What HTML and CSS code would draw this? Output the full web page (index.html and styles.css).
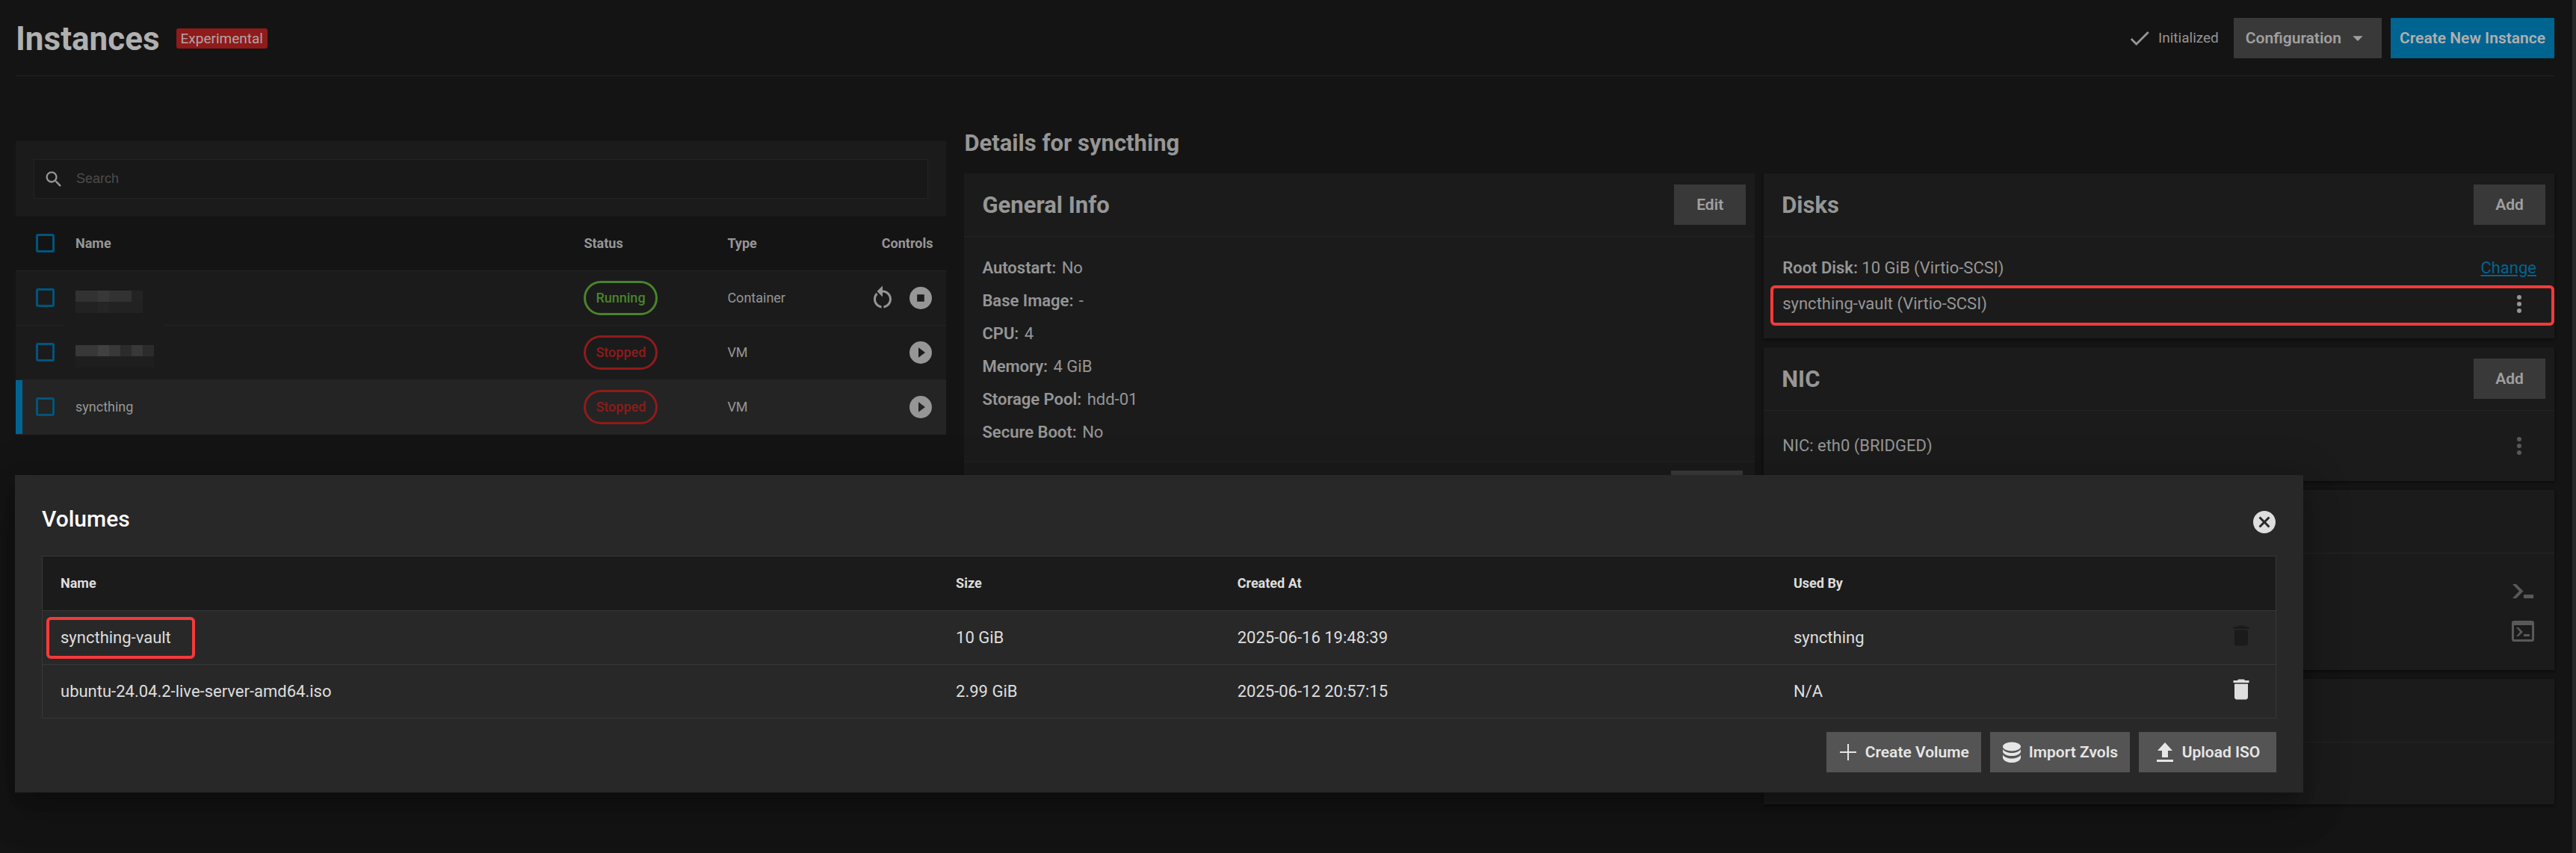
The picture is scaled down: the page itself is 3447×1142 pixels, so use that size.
FILE: index.html
```html
<!DOCTYPE html>
<html lang="en">
<head>
  <meta charset="utf-8">
  <title>Instances</title>
  <link rel="stylesheet" href="styles.css">
</head>
<body>
  <div class="page">
    <header class="page-header">
      <h1>Instances</h1>
      <span class="badge">Experimental</span>
      <div class="header-actions">
        <span class="state">
          <svg width="34" height="34" viewBox="0 0 24 24"><path d="M9 16.2L4.8 12l-1.4 1.4L9 19 21 7l-1.4-1.4z"/></svg>
          Initialized
        </span>
        <button class="btn btn-config">Configuration
          <svg width="32" height="32" viewBox="0 0 24 24"><path d="M7 10l5 5 5-5z"/></svg>
        </button>
        <button class="btn btn-primary">Create New Instance</button>
      </div>
    </header>

    <main class="content">
      <section class="list">
        <div class="search-panel">
          <label class="search-box" for="search">
            <svg width="28" height="28" viewBox="0 0 24 24"><path d="M15.5 14h-.79l-.28-.27A6.47 6.47 0 0 0 16 9.5 6.5 6.5 0 1 0 9.5 16c1.61 0 3.09-.59 4.23-1.57l.27.28v.79l5 4.99L20.49 19l-4.99-5zm-6 0C7.01 14 5 11.99 5 9.5S7.01 5 9.5 5 14 7.01 14 9.5 11.99 14 9.5 14z"/></svg>
            <input type="text" id="search" placeholder="Search">
          </label>
        </div>
        <table class="instances">
          <colgroup>
            <col class="col-check"><col><col class="col-status"><col class="col-type"><col class="col-controls">
          </colgroup>
          <thead>
            <tr>
              <th><input type="checkbox" aria-label="Select all"></th>
              <th>Name</th>
              <th>Status</th>
              <th>Type</th>
              <th class="controls-head">Controls</th>
            </tr>
          </thead>
          <tbody>
            <tr>
              <td><input type="checkbox" aria-label="Select instance"></td>
              <td>
                <div class="masked masked-first">
                  <svg width="90" height="30" shape-rendering="crispEdges">
                    <path fill="#323232" d="M0 0h75v15H0z"/><path fill="#383838" d="M30 0h15v15H30z"/><path fill="#232323" d="M75 0h15v15H75z"/>
                    <path fill="#222" d="M0 15h90v15H0z"/><path fill="#252525" d="M30 15h15v15H30z"/>
                  </svg>
                </div>
              </td>
              <td><span class="pill running">Running</span></td>
              <td>Container</td>
              <td>
                <div class="controls">
                  <button class="icon-btn" aria-label="Restart"><svg width="36" height="36" viewBox="0 0 24 24"><path d="M12 5V1L7 6l5 5V7c3.31 0 6 2.69 6 6 0 2.97-2.17 5.43-5 5.91v2.02c3.95-.49 7-3.85 7-7.93 0-4.42-3.58-8-8-8zM6 13c0-1.65.67-3.15 1.76-4.24L6.34 7.34A8 8 0 0 0 4 13c0 4.08 3.05 7.44 7 7.93v-2.02c-2.83-.48-5-2.94-5-5.91z"/></svg></button>
                  <button class="icon-btn" aria-label="Stop"><svg width="36" height="36" viewBox="0 0 24 24"><path d="M12 2a10 10 0 1 0 0 20 10 10 0 0 0 0-20zm3.200 13.200H8.800V8.800h6.400z"/></svg></button>
                </div>
              </td>
            </tr>
            <tr>
              <td><input type="checkbox" aria-label="Select instance"></td>
              <td>
                <div class="masked">
                  <svg width="105" height="30" shape-rendering="crispEdges">
                    <path fill="#383838" d="M0 0h105v15H0z"/><path fill="#414141" d="M30 0h15v15H30z"/><path fill="#2b2b2b" d="M60 0h15v15H60zM90 0h15v15H90z"/>
                    <path fill="#1e1e1e" d="M0 15h105v15H0z"/>
                  </svg>
                </div>
              </td>
              <td><span class="pill stopped">Stopped</span></td>
              <td>VM</td>
              <td>
                <div class="controls">
                  <button class="icon-btn" aria-label="Start"><svg width="36" height="36" viewBox="0 0 24 24"><path d="M12 2a10 10 0 1 0 0 20 10 10 0 0 0 0-20zm-2 14.500v-9l6 4.500z"/></svg></button>
                </div>
              </td>
            </tr>
            <tr class="selected">
              <td><input type="checkbox" aria-label="Select syncthing"></td>
              <td>syncthing</td>
              <td><span class="pill stopped">Stopped</span></td>
              <td>VM</td>
              <td>
                <div class="controls">
                  <button class="icon-btn" aria-label="Start"><svg width="36" height="36" viewBox="0 0 24 24"><path d="M12 2a10 10 0 1 0 0 20 10 10 0 0 0 0-20zm-2 14.500v-9l6 4.500z"/></svg></button>
                </div>
              </td>
            </tr>
          </tbody>
        </table>
      </section>

      <section class="details">
        <h2>Details for syncthing</h2>
        <div class="details-columns">
          <div class="column">
            <div class="card card-general">
              <div class="card-header">
                <h3>General Info</h3>
                <button class="btn">Edit</button>
              </div>
              <div class="info">
                <p><strong>Autostart:</strong> No</p>
                <p><strong>Base Image:</strong> -</p>
                <p><strong>CPU:</strong> 4</p>
                <p><strong>Memory:</strong> 4 GiB</p>
                <p><strong>Storage Pool:</strong> hdd-01</p>
                <p><strong>Secure Boot:</strong> No</p>
              </div>
              <div class="card-actions">
                <button class="btn">Delete</button>
              </div>
            </div>
          </div>
          <div class="column">
            <div class="card">
              <div class="card-header">
                <h3>Disks</h3>
                <button class="btn">Add</button>
              </div>
              <div class="rows rows-disks">
                <div class="row row-root">
                  <span><strong>Root Disk:</strong> 10 GiB (Virtio-SCSI)</span>
                  <a href="#">Change</a>
                </div>
                <div class="row row-marked">
                  <span>syncthing-vault (Virtio-SCSI)</span>
                  <button class="icon-btn" aria-label="Disk menu"><svg width="36" height="36" viewBox="0 0 24 24"><path d="M12 8a2 2 0 1 0 0-4 2 2 0 0 0 0 4zm0 2a2 2 0 1 0 0 4 2 2 0 0 0 0-4zm0 6a2 2 0 1 0 0 4 2 2 0 0 0 0-4z"/></svg></button>
                </div>
              </div>
            </div>
            <div class="card">
              <div class="card-header">
                <h3>NIC</h3>
                <button class="btn">Add</button>
              </div>
              <div class="rows rows-nic">
                <div class="row">
                  <span>NIC: eth0 (BRIDGED)</span>
                  <button class="icon-btn faded" aria-label="NIC menu"><svg width="36" height="36" viewBox="0 0 24 24"><path d="M12 8a2 2 0 1 0 0-4 2 2 0 0 0 0 4zm0 2a2 2 0 1 0 0 4 2 2 0 0 0 0-4zm0 6a2 2 0 1 0 0 4 2 2 0 0 0 0-4z"/></svg></button>
                </div>
              </div>
            </div>
            <div class="card">
              <div class="card-header"></div>
              <div class="tools">
                <button class="icon-btn faded" aria-label="Shell"><svg width="30" height="30" viewBox="0 0 30 30"><path d="M1 4h5l9.500 9.500L6 23H1l9-9.500zM16 18h13v5H16z"/></svg></button>
                <button class="icon-btn faded" aria-label="Console"><svg width="30" height="30" viewBox="0 0 30 30"><path fill-rule="evenodd" d="M3 1h24a3 3 0 0 1 3 3v22a3 3 0 0 1-3 3H3a3 3 0 0 1-3-3V4a3 3 0 0 1 3-3zm0 6v19h24V7z"/><path d="M6 10h3l6 6-6 6H6l5-6zM16 19h8v3h-8z"/></svg></button>
              </div>
            </div>
            <div class="card">
              <div class="card-header"></div>
              <div class="blank"></div>
            </div>
          </div>
        </div>
      </section>
    </main>
  </div>

  <div class="scroll-track"></div>

  <div class="dialog" role="dialog" aria-labelledby="volumes-title">
    <div class="dialog-header">
      <h2 id="volumes-title">Volumes</h2>
      <button class="icon-btn" aria-label="Close"><svg width="36" height="36" viewBox="0 0 24 24"><path d="M12 2C6.470 2 2 6.470 2 12s4.470 10 10 10 10-4.470 10-10S17.530 2 12 2zm5 13.590L15.590 17 12 13.410 8.410 17 7 15.590 10.590 12 7 8.410 8.410 7 12 10.590 15.590 7 17 8.410 13.410 12z"/></svg></button>
    </div>
    <table class="volumes">
      <colgroup>
        <col class="col-name"><col class="col-size"><col class="col-created"><col><col class="col-delete">
      </colgroup>
      <thead>
        <tr>
          <th>Name</th>
          <th>Size</th>
          <th>Created At</th>
          <th>Used By</th>
          <th></th>
        </tr>
      </thead>
      <tbody>
        <tr>
          <td><span class="marked">syncthing-vault</span></td>
          <td>10 GiB</td>
          <td>2025-06-16 19:48:39</td>
          <td>syncthing</td>
          <td class="delete"><button class="icon-btn" disabled aria-label="Delete syncthing-vault"><svg width="36" height="36" viewBox="0 0 24 24"><path d="M6 19c0 1.100.9 2 2 2h8c1.100 0 2-.9 2-2V7H6v12zM19 4h-3.500l-1-1h-5l-1 1H5v2h14V4z"/></svg></button></td>
        </tr>
        <tr>
          <td>ubuntu-24.04.2-live-server-amd64.iso</td>
          <td>2.99 GiB</td>
          <td>2025-06-12 20:57:15</td>
          <td>N/A</td>
          <td class="delete"><button class="icon-btn" aria-label="Delete ISO"><svg width="36" height="36" viewBox="0 0 24 24"><path d="M6 19c0 1.100.9 2 2 2h8c1.100 0 2-.9 2-2V7H6v12zM19 4h-3.500l-1-1h-5l-1 1H5v2h14V4z"/></svg></button></td>
        </tr>
      </tbody>
    </table>
    <div class="dialog-actions">
      <button class="btn"><svg width="26" height="28" viewBox="0 0 26 28"><path d="M12 3h2v10h10v2H14v10h-2V15H2v-2h10z"/></svg>Create Volume</button>
      <button class="btn"><svg width="26" height="28" viewBox="0 0 26 28"><ellipse cx="13" cy="6.500" rx="12" ry="6"/><path d="M1 10c2 3.500 7 5 12 5s10-1.500 12-5v3.500c-1 3.500-6 5.500-12 5.500S2 17 1 13.500z"/><path d="M1 17.500c2 3.500 7 5 12 5s10-1.500 12-5V22c-1 3.500-6 6-12 6S2 25.500 1 22z"/></svg>Import Zvols</button>
      <button class="btn"><svg width="26" height="28" viewBox="0 0 26 28"><path d="M13 1l10 11h-6v9H9v-9H3zM2 24h22v3H2z"/></svg>Upload ISO</button>
    </div>
  </div>
</body>
</html>
```
FILE: styles.css
```css
* {
  box-sizing: border-box;
}
body {
  margin: 0;
  min-height: 100vh;
  background: #141414;
  color: #969696;
  font-family: Roboto, "Liberation Sans", sans-serif;
  font-size: 22px;
  line-height: 28px;
}
h1, h2, h3, p {
  margin: 0;
}
h2, h3 {
  font-size: 31px;
  line-height: 36px;
  font-weight: 700;
}
strong {
  font-weight: 600;
}
svg {
  display: block;
  flex: none;
  fill: currentColor;
}
.page {
  padding: 0 29px 0 21px;
}

/* header */
.page-header {
  display: flex;
  align-items: center;
  height: 102px;
  border-bottom: 1px solid #242424;
}
.page-header h1 {
  padding-top: 2px;
  color: #b0b0b0;
  font-size: 44px;
  line-height: 52px;
}
.badge {
  margin-top: 2px;
  margin-left: 22px;
  padding: 0 6px;
  border-radius: 3px;
  background: #8f1b1b;
  color: #b5a5a5;
  font-size: 19px;
  line-height: 27px;
}
.header-actions {
  display: flex;
  align-items: center;
  gap: 12px;
  margin-left: auto;
}
.state {
  display: flex;
  align-items: center;
  gap: 8px;
  margin-right: 8px;
  font-size: 19px;
}
.btn {
  display: flex;
  align-items: center;
  justify-content: center;
  gap: 6px;
  min-width: 96px;
  height: 54px;
  padding: 0 16px;
  border: 0;
  background: #393939;
  color: #a0a0a0;
  font: 600 21px Roboto, "Liberation Sans", sans-serif;
  cursor: pointer;
}
.btn-primary {
  padding: 0 12px;
  background: #006491;
  color: #b0b0b0;
}
.icon-btn {
  padding: 0;
  border: 0;
  background: none;
  color: inherit;
  cursor: pointer;
}
.faded {
  color: #595959;
}

.content {
  display: grid;
  grid-template-columns: 24fr 41fr;
  gap: 24px;
  padding-top: 72px;
}

/* instance list */
.list {
  padding-top: 15px;
}
.search-panel {
  padding: 24px;
  background: #1b1b1b;
}
.search-box {
  display: flex;
  align-items: center;
  gap: 14px;
  height: 53px;
  padding: 0 12px;
  border: 1px solid #242424;
  background: #181818;
}
.search-box input {
  flex: 1;
  border: 0;
  outline: 0;
  background: none;
  color: #969696;
  font: 18px "Liberation Sans", sans-serif;
}
.search-box input::placeholder {
  color: #4c4c4c;
}
table {
  width: 100%;
  border-collapse: collapse;
  table-layout: fixed;
}
th {
  padding: 0;
  font-size: 18px;
  font-weight: 700;
  text-align: left;
}
td {
  padding: 0;
}
.instances {
  font-size: 18px;
}
.instances tr {
  height: 73px;
  border-bottom: 1px solid #242424;
}
.instances thead tr {
  height: 72px;
}
.instances tbody tr {
  background: #1b1b1b;
}
.instances tbody .selected {
  background: #242424;
}
.selected td:first-child {
  box-shadow: inset 9px 0 #006491;
}
.col-check {
  width: 80px;
}
.col-status {
  width: 192px;
}
.col-type {
  width: 154px;
}
.col-controls {
  width: 139px;
}
.instances input {
  appearance: none;
  display: block;
  width: 25px;
  height: 25px;
  margin: 0 0 0 27px;
  border: 3px solid #00557c;
  border-radius: 3px;
}
.controls-head {
  padding-right: 18px;
  text-align: right;
}
.controls {
  display: flex;
  justify-content: flex-end;
  gap: 15px;
  padding-right: 16px;
}
.masked {
  position: relative;
  padding-top: 10px;
}
.masked-first::after {
  content: "";
  position: absolute;
  top: 48px;
  left: -15px;
  width: 134px;
  height: 16px;
  background: #1b1b1b;
}
.pill {
  display: inline-block;
  padding: 6px 13px;
  border: 3px solid;
  border-radius: 23px;
  vertical-align: middle;
  font-weight: 500;
}
.running {
  color: #4a842b;
}
.stopped {
  color: #8f1b1b;
}

/* details */
.details h2 {
  margin-bottom: 22px;
}
.details-columns {
  display: grid;
  grid-template-columns: 1fr 1fr;
  gap: 12px;
}
.column {
  display: flex;
  flex-direction: column;
  gap: 12px;
}
.card {
  background: #1b1b1b;
  box-shadow: 0 2px 3px #0c0c0c;
}
.card-general {
  box-shadow: none;
}
.card-header {
  display: flex;
  align-items: center;
  justify-content: space-between;
  height: 85px;
  padding: 0 12px 0 24px;
  border-bottom: 1px solid #242424;
}
.card-header h3 {
  padding-top: 2px;
}
.info {
  display: flex;
  flex-direction: column;
  gap: 16px;
  padding: 28px 24px 24px;
}
.info strong {
  margin-right: 2px;
}
.card-actions {
  display: flex;
  justify-content: flex-end;
  padding: 12px 16px;
  border-top: 1px solid #242424;
}
.row {
  display: flex;
  align-items: center;
  justify-content: space-between;
  height: 54px;
  padding: 0 29px 0 16px;
}
.row-root {
  height: 36px;
  padding-right: 24px;
}
.rows-disks {
  padding: 24px 0 17px 9px;
}
.rows-disks .row-root {
  margin-bottom: 5px;
}
.row-marked {
  border: 4px solid #f43a3a;
  border-radius: 6px;
  padding: 0 25px 4px 12px;
}
.rows-nic {
  padding: 20px 0 20px 9px;
}
.row a {
  color: #006491;
}
.tools {
  display: flex;
  flex-direction: column;
  align-items: flex-end;
  gap: 22px;
  padding: 37px 27px;
}
.blank {
  height: 83px;
}
.scroll-track {
  position: fixed;
  top: 0;
  right: 0;
  bottom: 0;
  width: 5px;
  background: #292929;
}

/* volumes dialog */
.dialog {
  position: absolute;
  top: 636px;
  left: 20px;
  right: 365px;
  padding: 36px;
  padding-bottom: 27px;
  background: #282828;
  color: #dedede;
  box-shadow: 0 14px 20px -9px rgba(0, 0, 0, 0.2), 0 30px 48px 4px rgba(0, 0, 0, 0.14), 0 11px 58px 10px rgba(0, 0, 0, 0.12);
}
.dialog-header {
  display: flex;
  align-items: center;
  justify-content: space-between;
  padding-top: 5px;
  margin-right: -2px;
  margin-bottom: 23px;
}
.dialog h2 {
  padding-bottom: 8px;
  color: #fff;
  font-size: 30px;
  font-weight: 500;
}
.volumes {
  border: 1px solid #383838;
}
.volumes tr {
  height: 72px;
  border-bottom: 1px solid #383838;
}
.volumes thead {
  background: #1b1b1b;
}
.volumes thead tr {
  height: 73px;
}
.volumes th, .volumes td {
  padding-left: 24px;
}
.col-name {
  width: 40.1%;
}
.col-size {
  width: 12.6%;
}
.col-created {
  width: 24.9%;
}
.col-delete {
  width: 88px;
}
.volumes .delete {
  padding-top: 2px;
  padding-left: 23px;
}
.volumes button:disabled {
  color: #1b1b1b;
  cursor: default;
}
.marked {
  display: inline-block;
  margin-left: -19px;
  padding: 10px 28px 10px 15px;
  border: 4px solid #f43a3a;
  border-radius: 6px;
  vertical-align: middle;
}
.dialog-actions {
  display: flex;
  justify-content: flex-end;
  gap: 12px;
  margin-top: 18px;
}
.dialog-actions .btn {
  gap: 10px;
  min-width: 184px;
  background: #545454;
  color: #e6e6e6;
}
```
